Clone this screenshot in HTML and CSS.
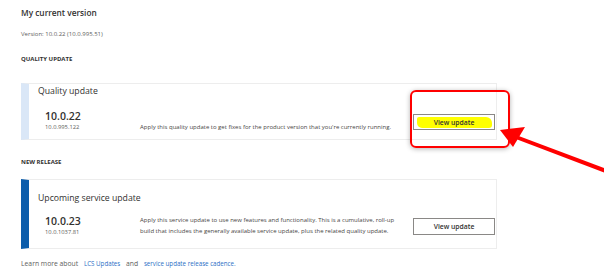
FILE: index.html
```html
<!DOCTYPE html>
<html lang="en">
<head>
    <meta charset="UTF-8">
    <title>My current version</title>
    <link rel="stylesheet" href="styles.css">
</head>
<body>
    <div class="page">
        <h2 class="page-title">My current version</h2>
        <p class="current">Version: 10.0.22 (10.0.995.51)</p>

        <h3 class="section">QUALITY UPDATE</h3>
        <div class="card card-quality">
            <div class="card-body">
                <div class="card-title">Quality update</div>
                <div class="card-row">
                    <div class="version">
                        <div class="version-main">10.0.22</div>
                        <div class="version-sub">10.0.995.122</div>
                    </div>
                    <div class="desc desc-bottom">Apply this quality update to get fixes for the product version that you're currently running.</div>
                    <button class="btn btn-marked"><span class="marker"></span><span class="btn-label">View update</span></button>
                </div>
            </div>
        </div>

        <h3 class="section section-new">NEW RELEASE</h3>
        <div class="card card-service">
            <div class="card-body">
                <div class="card-title">Upcoming service update</div>
                <div class="card-row">
                    <div class="version">
                        <div class="version-main">10.0.23</div>
                        <div class="version-sub">10.0.1037.81</div>
                    </div>
                    <div class="desc">Apply this service update to use new features and functionality. This is a cumulative, roll&#8209;up build that includes the generally available service update, plus the related quality update.</div>
                    <button class="btn"><span class="btn-label">View update</span></button>
                </div>
            </div>
        </div>

        <p class="footer">Learn more about <a href="#">LCS Updates</a> and <a href="#">service update release cadence.</a></p>
    </div>

    <!-- annotation -->
    <div class="highlight-box"></div>
    <svg class="arrow" width="604" height="273" viewBox="0 0 604 273">
        <line x1="516" y1="137" x2="606" y2="171" stroke="#ff0000" stroke-width="4"/>
        <polygon points="500,130 525,127 513,147" fill="#ff0000"/>
    </svg>
</body>
</html>
```

FILE: styles.css
```css
* {
    margin: 0;
    padding: 0;
    box-sizing: border-box;
    font-family: 'Open Sans', sans-serif;
}

body {
    background: #fff;
    color: #323130;
    width: 604px;
    height: 273px;
    overflow: hidden;
    position: relative;
}

.page {
    padding: 7px 0 0 21px;
}

.page-title {
    font-size: 8.3px;
    font-weight: 600;
    line-height: 12px;
}

.current {
    font-size: 6px;
    color: #605e5c;
    line-height: 10px;
    margin-top: 10px;
}

.section {
    font-size: 6px;
    font-weight: 700;
    line-height: 10px;
    margin-top: 15px;
}

.section-new {
    margin-top: 17px;
}

.card {
    width: 476px;
    border: 1px solid #ededed;
    border-left: 8px solid #dae7f7;
    background: #fff;
}

.card-quality {
    margin-top: 19px;
}

.card-service {
    margin-top: 12px;
    border-left-color: #0c5dab;
}

.card-body {
    padding: 0 0 7px 9px;
}

.card-service .card-body {
    padding: 11px 0 11px 9px;
}

.card-title {
    font-size: 8.7px;
    line-height: 14px;
}

.card-row {
    display: flex;
    align-items: center;
    margin-top: 12px;
}

.card-service .card-row {
    margin-top: 10px;
}

.version {
    width: 95px;
    margin-left: 7px;
}

.version-main {
    font-size: 10.5px;
    font-weight: 600;
    line-height: 12px;
}

.version-sub {
    font-size: 5.8px;
    color: #605e5c;
    line-height: 10px;
}

.desc {
    flex: 1;
    font-size: 6px;
    color: #484644;
    line-height: 11px;
    padding-right: 8px;
}

.desc-bottom {
    align-self: flex-end;
    margin-bottom: -1px;
}

.btn {
    position: relative;
    width: 82px;
    height: 17px;
    border: 1px solid #8a8886;
    background: #fff;
    margin-right: 1px;
    font-size: 6.8px;
    font-weight: 600;
    color: #323130;
    cursor: pointer;
}

.btn-marked {
    height: 16px;
    margin-top: 2px;
}

.btn-label {
    position: relative;
}

.marker {
    position: absolute;
    left: 3px;
    right: 2px;
    top: 2px;
    bottom: 1px;
    background: #ffff00;
    border-radius: 2px 6px 3px 5px;
}

.footer {
    font-size: 6.8px;
    color: #605e5c;
    margin-top: 10px;
    line-height: 10px;
}

.footer a {
    color: #2b6fc6;
    text-decoration: none;
    font-size: 6.2px;
    margin: 0 4px;
}

.highlight-box {
    position: absolute;
    left: 410px;
    top: 90px;
    width: 100px;
    height: 58px;
    border: 2px solid #ff0000;
    border-radius: 6px;
    box-shadow: 0 1px 5px rgba(0,0,0,0.3);
}

.arrow {
    position: absolute;
    left: 0;
    top: 0;
    pointer-events: none;
}
```
